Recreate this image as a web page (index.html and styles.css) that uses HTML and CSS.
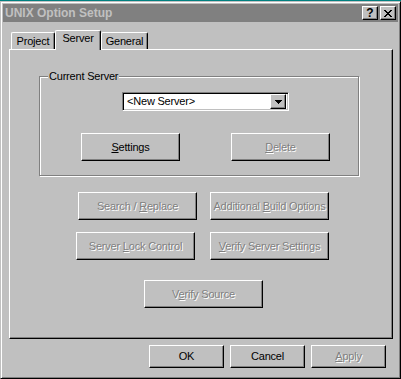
FILE: index.html
```html
<!DOCTYPE html>
<html lang="en">

<head>
    <meta charset="UTF-8">
    <title>UNIX Option Setup</title>
    <link rel="stylesheet" href="styles.css">
</head>

<body>

    <div class="window">
        <!-- Barra de título -->
        <div class="titlebar">
            <span class="title">UNIX Option Setup</span>
            <div class="title-buttons">
                <button class="title-btn">?</button>
                <button class="title-btn">
                    <svg width="8" height="7" viewBox="0 0 8 7" shape-rendering="crispEdges">
                        <path fill="#000" d="M0 0h2v1H0z M6 0h2v1H6z M1 1h2v1H1z M5 1h2v1H5z M2 2h4v1H2z M3 3h2v1H3z M2 4h4v1H2z M1 5h2v1H1z M5 5h2v1H5z M0 6h2v1H0z M6 6h2v1H6z"/>
                    </svg>
                </button>
            </div>
        </div>

        <!-- Pestañas -->
        <div class="tabs">
            <div class="tab tab-project">Project</div>
            <div class="tab tab-server active">Server</div>
            <div class="tab tab-general">General</div>
        </div>

        <div class="panel">
            <div class="group">
                <span class="group-label">Current Server</span>
                <div class="combo">
                    <span class="combo-value">&lt;New Server&gt;</span>
                    <span class="combo-btn">
                        <svg width="7" height="4" viewBox="0 0 7 4" shape-rendering="crispEdges">
                            <path fill="#000" d="M0 0h7v1H0z M1 1h5v1H1z M2 2h3v1H2z M3 3h1v1H3z"/>
                        </svg>
                    </span>
                </div>
                <div class="group-buttons">
                    <button class="btn btn-group"><u>S</u>ettings</button>
                    <button class="btn btn-group" disabled><u>D</u>elete</button>
                </div>
            </div>

            <div class="row row-1">
                <button class="btn btn-wide" disabled>Search / <u>R</u>eplace</button>
                <button class="btn btn-wide" disabled>Additional <u>B</u>uild Options</button>
            </div>
            <div class="row row-2">
                <button class="btn btn-wide" disabled>Server <u>L</u>ock Control</button>
                <button class="btn btn-wide" disabled><u>V</u>erify Server Settings</button>
            </div>
            <div class="row row-3">
                <button class="btn btn-wide" disabled>V<u>e</u>rify Source</button>
            </div>
        </div>

        <!-- Botones del diálogo -->
        <div class="footer">
            <button class="btn btn-dialog">OK</button>
            <button class="btn btn-dialog">Cancel</button>
            <button class="btn btn-dialog" disabled><u>A</u>pply</button>
        </div>
    </div>

</body>

</html>
```

FILE: styles.css
```css
/* Estilos generales */
* {
    box-sizing: border-box;
}

body {
    margin: 0;
    background-color: #008080;
    font-family: "Liberation Sans", Arial, sans-serif;
    font-size: 11px;
    letter-spacing: -0.2px;
    line-height: 13px;
    color: #000;
}

/* Ventana */
.window {
    width: 401px;
    height: 378px;
    margin-top: 1px;
    padding: 2px;
    background-color: #c0c0c0;
    border: 1px solid;
    border-color: #c0c0c0 #000 #000 #c0c0c0;
    box-shadow: inset 1px 1px #fff, inset -1px -1px #808080;
}

.titlebar {
    height: 18px;
    display: flex;
    align-items: center;
    padding-left: 2px;
    padding-right: 2px;
    background-color: #808080;
}

.title {
    font-size: 12px;
    font-weight: bold;
    letter-spacing: 0;
    color: #c0c0c0;
}

.title-buttons {
    margin-left: auto;
    display: flex;
    gap: 2px;
}

.title-btn {
    width: 16px;
    height: 14px;
    padding: 0;
    display: flex;
    align-items: center;
    justify-content: center;
    background-color: #c0c0c0;
    border: 1px solid;
    border-color: #fff #000 #000 #fff;
    box-shadow: inset -1px -1px #808080;
    font-family: "Liberation Sans", Arial, sans-serif;
    font-size: 12px;
    font-weight: bold;
    line-height: 12px;
    color: #000;
}

/* Pestañas */
.tabs {
    height: 27px;
    display: flex;
    align-items: flex-end;
    padding-left: 8px;
}

.tab {
    height: 17px;
    padding-top: 2px;
    display: flex;
    justify-content: center;
    border-top: 1px solid #fff;
    border-left: 1px solid #fff;
    border-right: 1px solid #000;
    border-radius: 2px 2px 0 0;
    box-shadow: inset -1px 0 #808080;
    background-color: #c0c0c0;
}

.tab-project {
    width: 44px;
}

.tab-server {
    width: 46px;
}

.tab-general {
    width: 47px;
}

.tab.active {
    height: 20px;
    padding-top: 1px;
    margin-bottom: -1px;
    position: relative;
    z-index: 1;
}

/* Panel */
.panel {
    width: 384px;
    height: 290px;
    margin-left: 6px;
    border-top: 1px solid #fff;
    border-left: 1px solid #fff;
    border-right: 1px solid #000;
    border-bottom: 1px solid #000;
    box-shadow: inset -1px -1px #808080;
}

.group {
    position: relative;
    width: 320px;
    height: 100px;
    margin-left: 29px;
    margin-top: 26px;
    border: 1px solid #808080;
    box-shadow: inset 1px 1px #fff, 1px 1px #fff;
}

.group-label {
    position: absolute;
    top: -7px;
    left: 8px;
    padding: 0 1px;
    background-color: #c0c0c0;
}

.combo {
    width: 167px;
    height: 19px;
    margin-left: 82px;
    margin-top: 15px;
    padding: 2px;
    display: flex;
    align-items: center;
    background-color: #fff;
    border: 1px solid;
    border-color: #808080 #fff #fff #808080;
    box-shadow: inset 1px 1px #000, inset -1px -1px #c0c0c0;
}

.combo-value {
    padding-left: 2px;
}

.combo-btn {
    width: 16px;
    height: 15px;
    margin-left: auto;
    display: flex;
    align-items: center;
    justify-content: center;
    background-color: #c0c0c0;
    border: 1px solid;
    border-color: #fff #000 #000 #fff;
    box-shadow: inset -1px -1px #808080;
}

.group-buttons {
    display: flex;
    gap: 51px;
    margin-top: 22px;
    margin-left: 41px;
}

/* Botones */
.btn {
    padding: 0;
    background-color: #c0c0c0;
    border: 1px solid;
    border-color: #fff #000 #000 #fff;
    box-shadow: inset -1px -1px #808080;
    font-family: inherit;
    font-size: 11px;
    letter-spacing: inherit;
    line-height: 13px;
    color: #000;
}

.btn:disabled {
    color: #808080;
    text-shadow: 1px 1px #fff;
}

.btn-group {
    width: 99px;
    height: 28px;
}

.btn-wide {
    width: 119px;
    height: 28px;
}

.btn-dialog {
    width: 75px;
    height: 23px;
}

.row {
    display: flex;
}

.row-1 {
    margin-top: 16px;
    margin-left: 68px;
    gap: 13px;
}

.row-2 {
    margin-top: 12px;
    margin-left: 66px;
    gap: 15px;
}

.row-3 {
    margin-top: 20px;
    margin-left: 134px;
}

.footer {
    display: flex;
    gap: 6px;
    margin-top: 6px;
    margin-left: 146px;
}
```
